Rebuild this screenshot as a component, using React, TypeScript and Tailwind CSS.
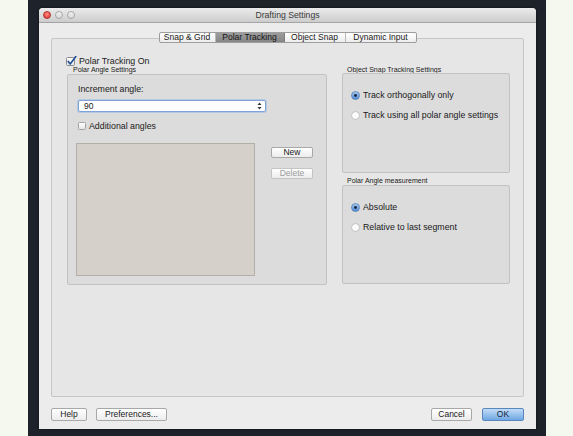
import React from "react";

const font = { fontFamily: '"Liberation Sans", Arial, sans-serif' };

function CheckOn() {
  return (
    <svg width="11" height="10" viewBox="0 0 11 10" className="block">
      <defs>
        <linearGradient id="cb" x1="0" y1="0" x2="0" y2="1">
          <stop offset="0" stopColor="#ffffff" />
          <stop offset="1" stopColor="#e4e4e4" />
        </linearGradient>
      </defs>
      <rect x="0.5" y="1.5" width="8" height="8" rx="1" fill="url(#cb)" stroke="#8c8c8c" />
      <path d="M2.2 5.4 L4.2 8 L9.8 0.6" fill="none" stroke="#1f4f96" strokeWidth="1.6" strokeLinecap="round" strokeLinejoin="round" />
    </svg>
  );
}

function CheckOff() {
  return (
    <div className="w-[8px] h-[8px] rounded-[1.5px] border border-[#a3a3a3] bg-gradient-to-b from-white to-[#e6e6e6]" />
  );
}

function Radio({ on }: { on?: boolean }) {
  if (on) {
    return (
      <svg width="9" height="9" viewBox="0 0 9 9" className="block">
        <defs>
          <linearGradient id="rb" x1="0" y1="0" x2="0" y2="1">
            <stop offset="0" stopColor="#a9ccf2" />
            <stop offset="1" stopColor="#4e8ad4" />
          </linearGradient>
        </defs>
        <circle cx="4.5" cy="4.5" r="4" fill="url(#rb)" stroke="#5a7fb4" strokeWidth="0.8" />
        <circle cx="4.5" cy="4.5" r="1.4" fill="#15243f" />
      </svg>
    );
  }
  return (
    <svg width="9" height="9" viewBox="0 0 9 9" className="block">
      <circle cx="4.5" cy="4.5" r="4" fill="#fbfbfb" stroke="#b4b4b4" strokeWidth="0.8" />
    </svg>
  );
}

function Btn({ w, children, disabled }: { w: string; children: React.ReactNode; disabled?: boolean }) {
  return (
    <div
      className={`${w} h-full flex items-center justify-center rounded-[2px] border border-[#a8a8a8] bg-gradient-to-b from-white to-[#ececec] text-[8.5px] leading-none ${
        disabled ? "text-[#9a9a9a] border-[#c4c4c4]" : "text-[#1a1a1a]"
      }`}
    >
      {children}
    </div>
  );
}

export default function App() {
  return (
    <div className="flex w-[573px] h-[436px] bg-[#f5f8ef] overflow-hidden" style={font}>
      <div className="w-[28px] shrink-0" />
      <div className="w-[518px] shrink-0 h-full bg-[#1e232b] pl-[11px] pt-[8px]">
        <div className="w-[497px] h-[421px] flex flex-col rounded-t-[4px] overflow-hidden bg-[#ececec] shadow-[0_0_3px_rgba(0,0,0,0.6)]">
          {/* title bar */}
          <div className="h-[15px] shrink-0 grid grid-cols-[1fr_auto_1fr] items-center bg-gradient-to-b from-[#ebebeb] to-[#cdcdcd] border-b border-[#a5a5a5]">
            <div className="flex items-center gap-[4px] pl-[4px]">
              <div className="w-[8px] h-[8px] rounded-full bg-[radial-gradient(circle_at_50%_35%,#ff8a80,#d9302a)] border border-[#b0332c]" />
              <div className="w-[8px] h-[8px] rounded-full bg-gradient-to-b from-[#f2f2f2] to-[#d8d8d8] border border-[#a6a6a6]" />
              <div className="w-[8px] h-[8px] rounded-full bg-gradient-to-b from-[#f2f2f2] to-[#d8d8d8] border border-[#a6a6a6]" />
            </div>
            <div className="text-[8.7px] leading-none text-[#3a3a3a]">Drafting Settings</div>
            <div />
          </div>

          {/* body */}
          <div className="flex-1 flex flex-col px-[12px]">
            {/* tabs */}
            <div className="pt-[9px] flex justify-center relative z-10">
              <div className="flex h-[11px] border border-[#9d9d9d] rounded-[2px] overflow-hidden text-[8.5px] leading-none text-[#1a1a1a] bg-gradient-to-b from-white to-[#ededed]">
                <div className="w-[56px] flex items-center justify-center border-r border-[#b9b9b9]">Snap &amp; Grid</div>
                <div className="w-[69px] flex items-center justify-center bg-gradient-to-b from-[#9c9c9c] to-[#868686] text-[#151515] border-r border-[#7d7d7d]">Polar Tracking</div>
                <div className="w-[61px] flex items-center justify-center border-r border-[#b9b9b9]">Object Snap</div>
                <div className="w-[70px] flex items-center justify-center">Dynamic Input</div>
              </div>
            </div>

            {/* pane */}
            <div className="-mt-[5px] h-[359px] shrink-0 border border-[#c6c6c6] rounded-[2px] bg-[#e6e6e6] pt-[17px] pl-[15px] flex gap-[15px]">
              {/* left column */}
              <div className="w-[260px] flex flex-col">
                <div className="h-[10px] flex items-center gap-[2px] -ml-[1px]">
                  <CheckOn />
                  <span className="text-[8.8px] leading-none text-[#1a1a1a]">Polar Tracking On</span>
                </div>
                <div className="h-[8px] pl-[6px] text-[7px] leading-[8px] text-[#1a1a1a]">Polar Angle Settings</div>
                <div className="h-[211px] border border-[#c2c2c2] rounded-[2px] bg-[#dcdcdc] flex flex-col">
                  <div className="pt-[9px] pl-[10px]">
                    <div className="h-[10px] text-[8.8px] leading-[10px] text-[#1a1a1a]">Increment angle:</div>
                    <div className="mt-[6px] w-[188px] h-[12px] rounded-[2px] border border-[#7fa3d6] bg-white shadow-[0_0_0_1px_rgba(140,180,230,0.45)] flex items-center justify-between pl-[5px] pr-[3px]">
                      <span className="text-[8.5px] leading-none text-[#1a1a1a]">90</span>
                      <svg width="5" height="8" viewBox="0 0 5 8" className="block">
                        <path d="M2.5 0.5 L4.5 3 L0.5 3 Z" fill="#333" />
                        <path d="M2.5 7.5 L4.5 5 L0.5 5 Z" fill="#333" />
                      </svg>
                    </div>
                    <div className="mt-[9px] h-[10px] flex items-center gap-[3px]">
                      <CheckOff />
                      <span className="text-[8.8px] leading-none text-[#1a1a1a]">Additional angles</span>
                    </div>
                  </div>
                  <div className="mt-[12px] pl-[8px] flex">
                    <div className="w-[179px] h-[133px] border border-[#b3afa8] bg-[#d5d1ca]" />
                    <div className="ml-[16px] w-[42px] flex flex-col">
                      <div className="mt-[4px] h-[11px]">
                        <Btn w="w-[42px]">New</Btn>
                      </div>
                      <div className="mt-[10px] h-[11px]">
                        <Btn w="w-[42px]" disabled>Delete</Btn>
                      </div>
                    </div>
                  </div>
                </div>
              </div>

              {/* right column */}
              <div className="w-[168px] flex flex-col mt-[10px]">
                <div className="h-[7px] pl-[5px] text-[7px] leading-[7px] text-[#1a1a1a]">Object Snap Tracking Settings</div>
                <div className="h-[100px] border border-[#c2c2c2] rounded-[2px] bg-[#dcdcdc] pt-[16px] pl-[8px]">
                  <div className="h-[10px] flex items-center gap-[3px]">
                    <Radio on />
                    <span className="text-[8.8px] leading-none text-[#1a1a1a]">Track orthogonally only</span>
                  </div>
                  <div className="mt-[10px] h-[10px] flex items-center gap-[3px]">
                    <Radio />
                    <span className="text-[8.8px] leading-none text-[#1a1a1a]">Track using all polar angle settings</span>
                  </div>
                </div>
                <div className="h-[12px] pl-[5px] flex items-end pb-[1px] text-[7px] leading-[7px] text-[#1a1a1a]">Polar Angle measurement</div>
                <div className="h-[99px] border border-[#c2c2c2] rounded-[2px] bg-[#dcdcdc] pt-[16px] pl-[8px]">
                  <div className="h-[10px] flex items-center gap-[3px]">
                    <Radio on />
                    <span className="text-[8.8px] leading-none text-[#1a1a1a]">Absolute</span>
                  </div>
                  <div className="mt-[10px] h-[10px] flex items-center gap-[3px]">
                    <Radio />
                    <span className="text-[8.8px] leading-none text-[#1a1a1a]">Relative to last segment</span>
                  </div>
                </div>
              </div>
            </div>

            {/* bottom buttons */}
            <div className="mt-[11px] h-[13px] flex">
              <Btn w="w-[36px]">Help</Btn>
              <div className="ml-[9px] h-full">
                <Btn w="w-[71px]">Preferences...</Btn>
              </div>
              <div className="flex-1" />
              <Btn w="w-[41px]">Cancel</Btn>
              <div className="ml-[10px] h-full w-[42px] flex items-center justify-center rounded-[2px] border border-[#5a86c0] bg-gradient-to-b from-[#c2dcf6] to-[#6ea7e3] text-[8.5px] leading-none text-[#14233c]">
                OK
              </div>
            </div>
          </div>
        </div>
      </div>
      <div className="flex-1" />
    </div>
  );
}
